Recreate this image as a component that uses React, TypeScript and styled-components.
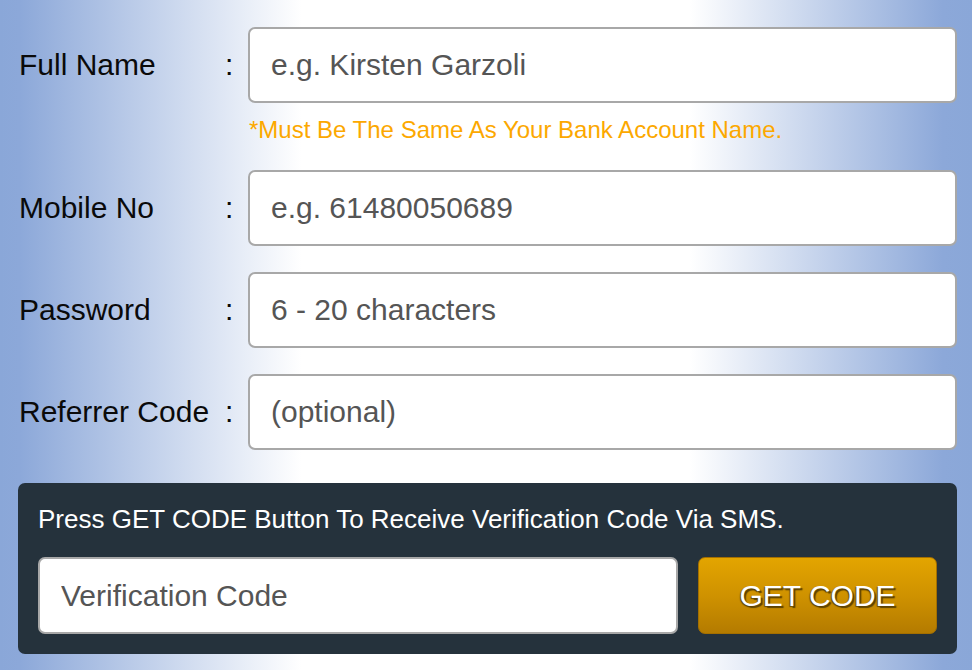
import React from "react";
import styled, { createGlobalStyle } from "styled-components";

const Global = createGlobalStyle`
  html, body {
    margin: 0;
    padding: 0;
    height: 100%;
  }
  body {
    font-family: "Liberation Sans", Arial, Helvetica, sans-serif;
    background: linear-gradient(
      to right,
      #8aa7d8 0%,
      #8ca8d9 2%,
      #ffffff 31%,
      #ffffff 71%,
      #8ca8d9 97%,
      #8aa7d8 100%
    );
    background-attachment: fixed;
  }
  * { box-sizing: border-box; }
`;

const Page = styled.div`
  width: 972px;
  height: 670px;
  padding-top: 27px;
  display: flex;
  flex-direction: column;
  gap: 26px;
  overflow: hidden;
`;

const Row = styled.div`
  display: flex;
  align-items: flex-start;
  padding: 0 15px 0 19px;
`;

const Label = styled.label`
  flex: 0 0 206px;
  height: 76px;
  display: flex;
  align-items: center;
  font-size: 30px;
  color: #0a0a0a;
  white-space: nowrap;
`;

const Colon = styled.span`
  flex: 0 0 23px;
  height: 76px;
  display: flex;
  align-items: center;
  font-size: 30px;
  color: #0a0a0a;
`;

const Field = styled.div`
  flex: 1;
  display: flex;
  flex-direction: column;
`;

const TextInput = styled.input`
  width: 100%;
  height: 76px;
  border: 2px solid #a8a8a8;
  border-radius: 7px;
  background: #fff;
  padding: 0 0 0 21px;
  font-family: "Liberation Sans", Arial, Helvetica, sans-serif;
  font-size: 30px;
  color: #333;
  outline: none;
  &::placeholder {
    color: #555;
    opacity: 1;
  }
`;

const Hint = styled.div`
  margin-top: 12px;
  padding-left: 1px;
  font-size: 24px;
  line-height: 29px;
  color: #fca800;
  white-space: nowrap;
`;

const Panel = styled.div`
  margin: 7px 15px 0 18px;
  background: #25323c;
  border-radius: 7px;
  padding: 20px;
  display: flex;
  flex-direction: column;
  gap: 22px;
`;

const PanelText = styled.div`
  font-size: 26px;
  line-height: 32px;
  color: #fff;
  white-space: nowrap;
`;

const CodeRow = styled.div`
  display: flex;
  gap: 20px;
`;

const CodeInput = styled(TextInput)`
  flex: 1;
  height: 77px;
`;

const GetCodeButton = styled.button`
  flex: 0 0 239px;
  height: 77px;
  border: 1px solid #a46f00;
  border-radius: 7px;
  background: linear-gradient(to bottom, #e3a500 0%, #cf9200 50%, #b47b00 100%);
  font-family: "Liberation Sans", Arial, Helvetica, sans-serif;
  font-size: 30px;
  color: #fff;
  text-shadow: 2px 2px 1px #5e4300, -1px 1px 1px #6a4b00;
  cursor: pointer;
  padding: 0;
`;

type FieldDef = {
  label: string;
  placeholder: string;
  type?: string;
  hint?: string;
};

const fields: FieldDef[] = [
  {
    label: "Full Name",
    placeholder: "e.g. Kirsten Garzoli",
    hint: "*Must Be The Same As Your Bank Account Name.",
  },
  { label: "Mobile No", placeholder: "e.g. 61480050689" },
  { label: "Password", placeholder: "6 - 20 characters", type: "password" },
  { label: "Referrer Code", placeholder: "(optional)" },
];

export default function App() {
  return (
    <>
      <Global />
      <Page>
        {fields.map((f) => (
          <Row key={f.label}>
            <Label>{f.label}</Label>
            <Colon>:</Colon>
            <Field>
              <TextInput type={f.type ?? "text"} placeholder={f.placeholder} />
              {f.hint && <Hint>{f.hint}</Hint>}
            </Field>
          </Row>
        ))}
        <Panel>
          <PanelText>
            Press GET CODE Button To Receive Verification Code Via SMS.
          </PanelText>
          <CodeRow>
            <CodeInput type="text" placeholder="Verification Code" />
            <GetCodeButton type="button">GET CODE</GetCodeButton>
          </CodeRow>
        </Panel>
      </Page>
    </>
  );
}
